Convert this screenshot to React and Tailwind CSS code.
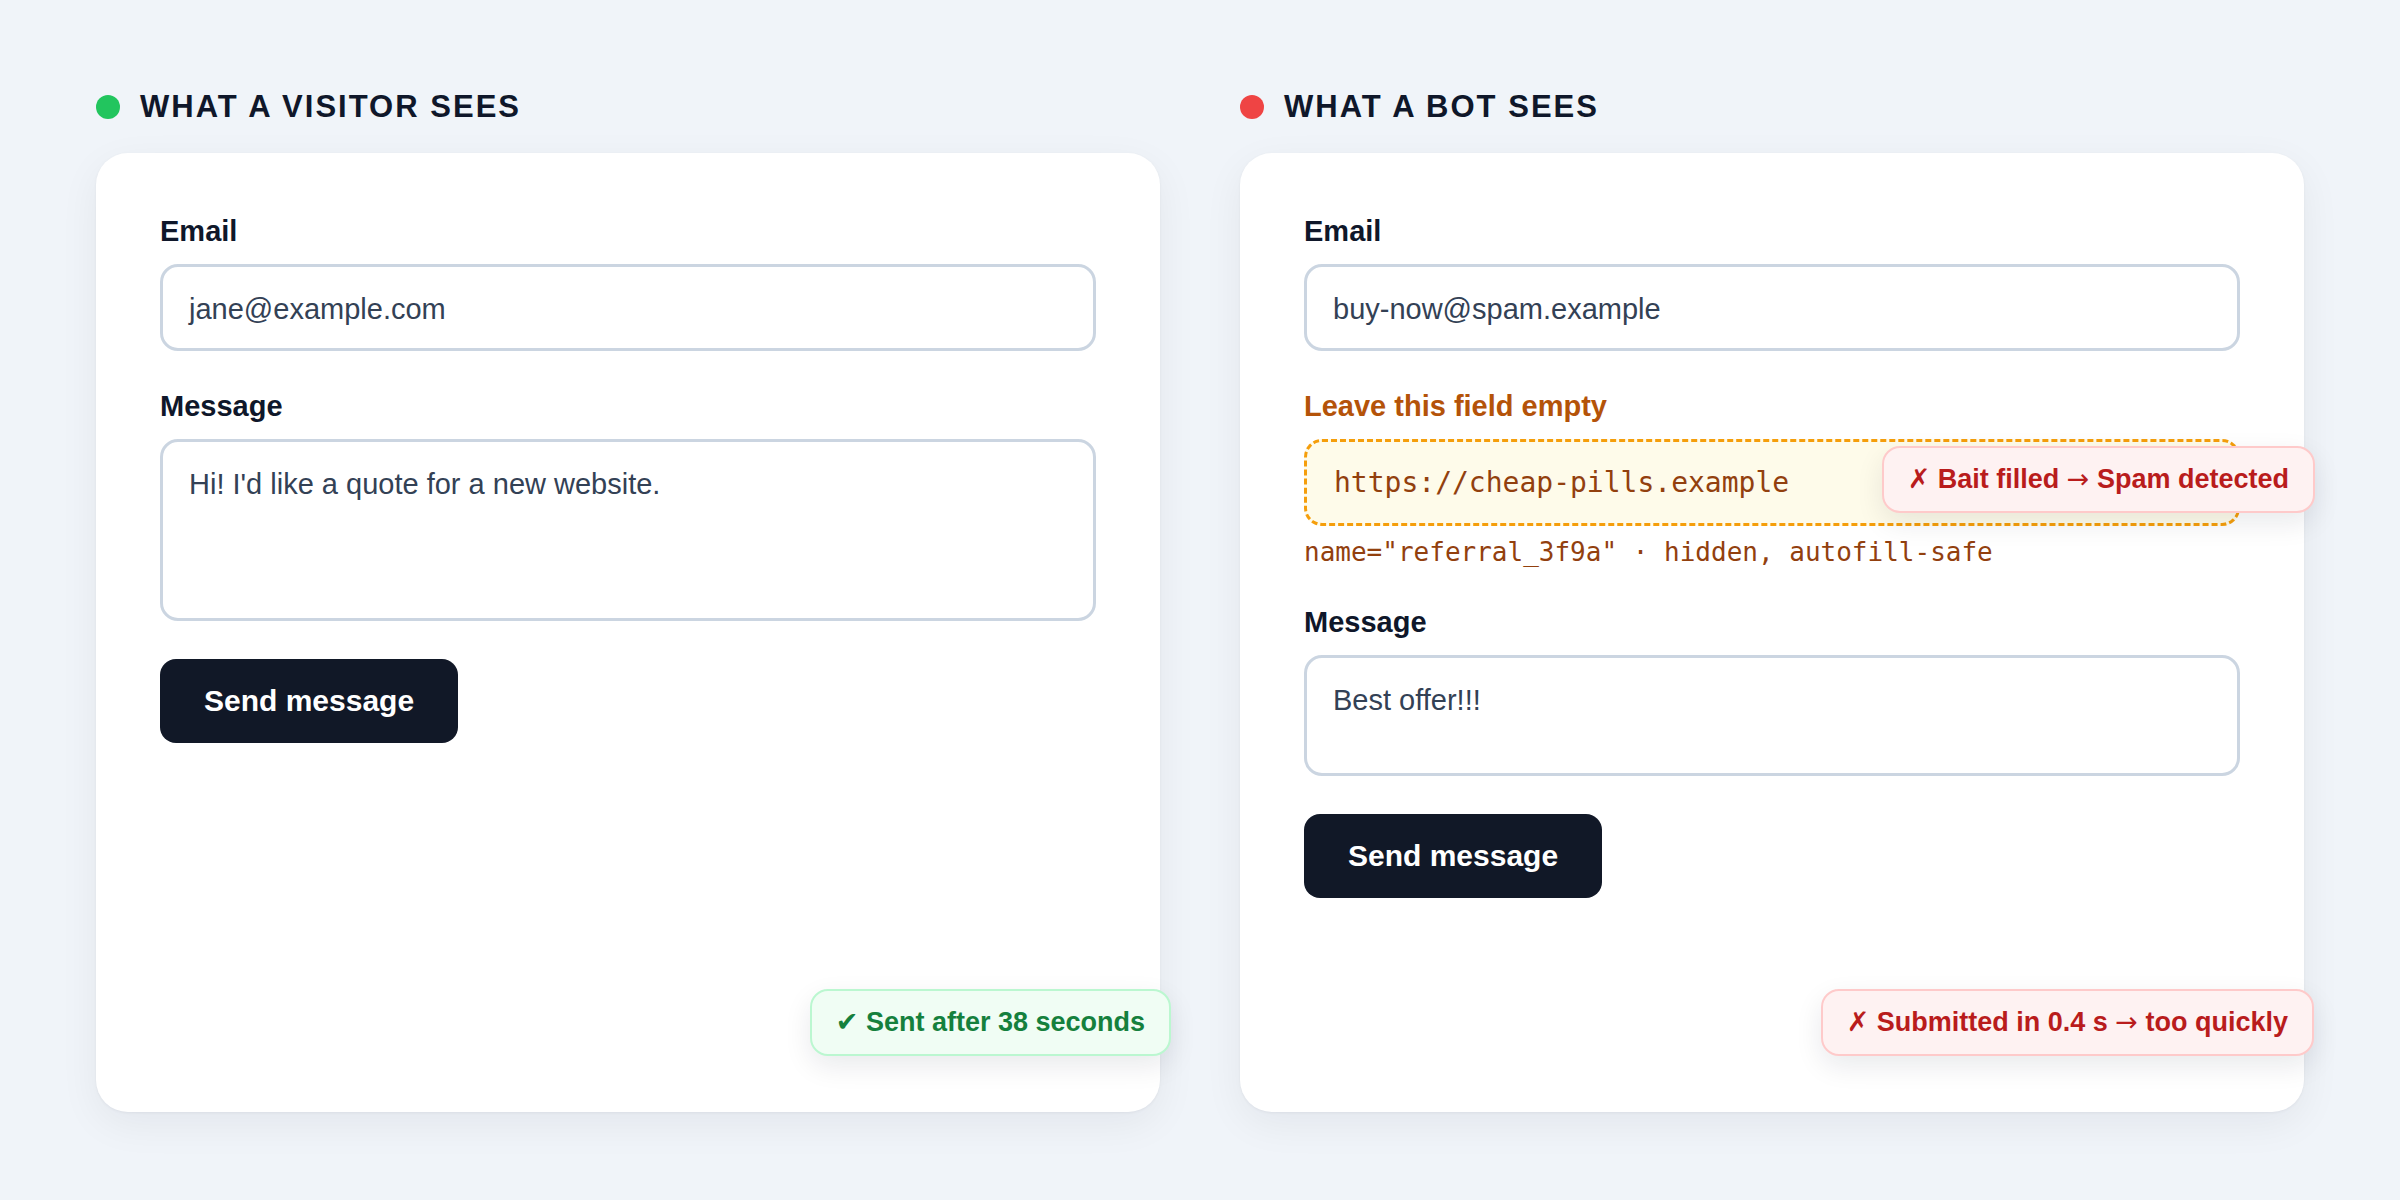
const sans = "font-['Liberation_Sans',Arial,sans-serif]";
const mono = "font-['DejaVu_Sans_Mono','Liberation_Mono',monospace]";

function Label({ children, tone = 'text-[#0f172a]' }) {
  return <div className={`text-[29px] font-bold leading-[35px] mb-[15px] ${tone}`}>{children}</div>;
}

function TextInput({ value }) {
  return (
    <div className="w-full h-[87px] rounded-[18px] border-[3px] border-[#cbd5e1] bg-white px-[26px] pt-[4px] flex items-center text-[29px] leading-[35px] text-[#334155]">
      {value}
    </div>
  );
}

function TextArea({ value, height }) {
  return (
    <div className={`w-full ${height} rounded-[18px] border-[3px] border-[#cbd5e1] bg-white px-[26px] pt-[25px] text-[29px] leading-[35px] text-[#334155]`}>
      {value}
    </div>
  );
}

function SendButton() {
  return (
    <button className="mt-[38px] h-[84px] px-[44px] rounded-[16px] bg-[#111827] text-white text-[30px] font-bold leading-none">
      Send message
    </button>
  );
}

// marks come from DejaVu, Liberation's are too small
const Glyph = ({ children }) => <span className="font-['DejaVu_Sans',sans-serif]">{children}</span>;
const Arrow = () => <span className="font-['DejaVu_Sans',sans-serif] font-normal">→</span>;

function Badge({ tone, children, className }) {
  const tones = {
    ok: 'bg-[#f0fdf4] border-[#bbf7d0] text-[#15803d]',
    bad: 'bg-[#fef2f2] border-[#fecaca] text-[#b91c1c]',
  };
  return (
    <div className={`absolute h-[67px] px-[24px] flex items-center whitespace-nowrap rounded-[18px] border-[2px] text-[27px] font-bold shadow-[0_10px_28px_rgba(15,23,42,0.09)] ${tones[tone]} ${className}`}>
      <span>{children}</span>
    </div>
  );
}

function Column({ dot, title, children }) {
  return (
    <div>
      <div className="flex items-center gap-[20px] h-[38px]">
        <span className={`w-[24px] h-[24px] rounded-full ${dot}`} />
        <span className="text-[31px] font-bold leading-[38px] tracking-[0.065em] uppercase text-[#0f172a]">{title}</span>
      </div>
      <div className="relative mt-[27px] h-[959px] rounded-[32px] bg-white px-[64px] pt-[61px] shadow-[0_12px_40px_rgba(15,23,42,0.06),0_1px_3px_rgba(15,23,42,0.05)]">
        {children}
      </div>
    </div>
  );
}

export default function App() {
  return (
    <div className={`${sans} w-full h-[1200px] bg-[#f0f4f9] px-[96px] pt-[88px] grid grid-cols-2 gap-x-[80px] items-start`}>
      {/* Human submission */}
      <Column dot="bg-[#22c55e]" title="What a visitor sees">
        <Label>Email</Label>
        <TextInput value="jane@example.com" />
        <div className="mt-[38px]">
          <Label>Message</Label>
          <TextArea value="Hi! I'd like a quote for a new website." height="h-[182px]" />
        </div>
        <SendButton />
        <Badge tone="ok" className="right-[-11px] bottom-[56px]"><Glyph>✔</Glyph> Sent after 38 seconds</Badge>
      </Column>

      {/* Bot submission with the honeypot field exposed */}
      <Column dot="bg-[#ef4444]" title="What a bot sees">
        <Label>Email</Label>
        <TextInput value="buy-now@spam.example" />
        <div className="mt-[38px]">
          <Label tone="text-[#b45309]">Leave this field empty</Label>
          <div className="relative">
            <div className={`${mono} w-full h-[87px] rounded-[18px] border-[3px] border-dashed border-[#f59e0b] bg-[#fefbea] px-[27px] flex items-center text-[28px] leading-[34px] text-[#92400e]`}>
              https://cheap-pills.example
            </div>
            <Badge tone="bad" className="top-[7px] right-[-75px]"><Glyph>✗</Glyph> Bait filled <Arrow /> Spam detected</Badge>
          </div>
          <div className={`${mono} mt-[11px] text-[26px] leading-[31px] text-[#92400e] whitespace-nowrap`}>
            name="referral_3f9a" · hidden, autofill-safe
          </div>
        </div>
        <div className="mt-[37px]">
          <Label>Message</Label>
          <TextArea value="Best offer!!!" height="h-[121px]" />
        </div>
        <SendButton />
        <Badge tone="bad" className="right-[-10px] bottom-[56px]"><Glyph>✗</Glyph> Submitted in 0.4 s <Arrow /> too quickly</Badge>
      </Column>
    </div>
  );
}
